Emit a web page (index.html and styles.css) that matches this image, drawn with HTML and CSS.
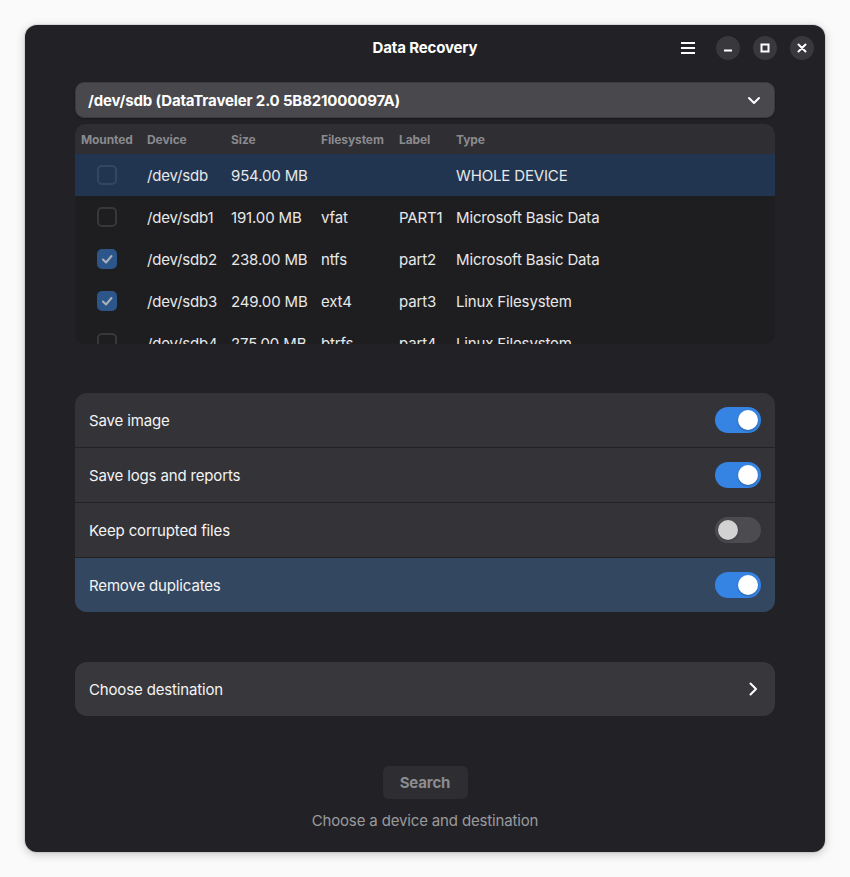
FILE: index.html
```html
<!DOCTYPE html>
<html lang="en">
<head>
<meta charset="utf-8">
<title>Data Recovery</title>
<link rel="stylesheet" href="styles.css">
</head>
<body>
<div class="window">
  <header class="headerbar">
    <div class="title">Data Recovery</div>
    <div class="hb-controls">
      <button class="menu-btn" aria-label="Menu">
        <svg width="16" height="14" viewBox="0 0 16 14"><rect x="1" y="1" width="14" height="2" fill="#fff"/><rect x="1" y="6" width="14" height="2" fill="#fff"/><rect x="1" y="11" width="14" height="2" fill="#fff"/></svg>
      </button>
      <button class="win-btn" aria-label="Minimize">
        <svg width="12" height="12" viewBox="0 0 12 12"><rect x="2" y="7.5" width="8" height="2" fill="#fff"/></svg>
      </button>
      <button class="win-btn" aria-label="Maximize">
        <svg width="12" height="12" viewBox="0 0 12 12"><rect x="2.5" y="2.5" width="7" height="7" fill="none" stroke="#fff" stroke-width="2"/></svg>
      </button>
      <button class="win-btn" aria-label="Close">
        <svg width="12" height="12" viewBox="0 0 12 12"><path d="M2.5 2.5 L9.5 9.5 M9.5 2.5 L2.5 9.5" stroke="#fff" stroke-width="2" stroke-linecap="round"/></svg>
      </button>
    </div>
  </header>

  <main class="content">
    <div class="dropdown">
      <span class="dropdown-label">/dev/sdb (DataTraveler 2.0 5B821000097A)</span>
      <svg class="chev-down" width="14" height="10" viewBox="0 0 14 10"><path d="M2 3 L7 8 L12 3" fill="none" stroke="#fff" stroke-width="2" stroke-linecap="round" stroke-linejoin="round"/></svg>
    </div>

    <div class="table">
      <div class="trow thead">
        <div class="c c1">Mounted</div>
        <div class="c c2">Device</div>
        <div class="c c3">Size</div>
        <div class="c c4">Filesystem</div>
        <div class="c c5">Label</div>
        <div class="c c6">Type</div>
      </div>
      <div class="trow selected">
        <div class="c c1"><span class="check"></span></div>
        <div class="c c2">/dev/sdb</div>
        <div class="c c3">954.00 MB</div>
        <div class="c c4"></div>
        <div class="c c5"></div>
        <div class="c c6">WHOLE DEVICE</div>
      </div>
      <div class="trow">
        <div class="c c1"><span class="check"></span></div>
        <div class="c c2">/dev/sdb1</div>
        <div class="c c3">191.00 MB</div>
        <div class="c c4">vfat</div>
        <div class="c c5">PART1</div>
        <div class="c c6">Microsoft Basic Data</div>
      </div>
      <div class="trow">
        <div class="c c1"><span class="check checked"><svg width="14" height="14" viewBox="0 0 14 14"><path d="M3 7.5 L6 10.5 L11.5 4" fill="none" stroke="#a9b1bc" stroke-width="2" stroke-linecap="round" stroke-linejoin="round"/></svg></span></div>
        <div class="c c2">/dev/sdb2</div>
        <div class="c c3">238.00 MB</div>
        <div class="c c4">ntfs</div>
        <div class="c c5">part2</div>
        <div class="c c6">Microsoft Basic Data</div>
      </div>
      <div class="trow">
        <div class="c c1"><span class="check checked"><svg width="14" height="14" viewBox="0 0 14 14"><path d="M3 7.5 L6 10.5 L11.5 4" fill="none" stroke="#a9b1bc" stroke-width="2" stroke-linecap="round" stroke-linejoin="round"/></svg></span></div>
        <div class="c c2">/dev/sdb3</div>
        <div class="c c3">249.00 MB</div>
        <div class="c c4">ext4</div>
        <div class="c c5">part3</div>
        <div class="c c6">Linux Filesystem</div>
      </div>
      <div class="trow">
        <div class="c c1"><span class="check"></span></div>
        <div class="c c2">/dev/sdb4</div>
        <div class="c c3">275.00 MB</div>
        <div class="c c4">btrfs</div>
        <div class="c c5">part4</div>
        <div class="c c6">Linux Filesystem</div>
      </div>
    </div>

    <div class="list">
      <div class="list-row">
        <span>Save image</span>
        <span class="switch on"><span class="knob"></span></span>
      </div>
      <div class="list-row">
        <span>Save logs and reports</span>
        <span class="switch on"><span class="knob"></span></span>
      </div>
      <div class="list-row">
        <span>Keep corrupted files</span>
        <span class="switch"><span class="knob"></span></span>
      </div>
      <div class="list-row active">
        <span>Remove duplicates</span>
        <span class="switch on"><span class="knob"></span></span>
      </div>
    </div>

    <div class="list single">
      <div class="list-row nav">
        <span>Choose destination</span>
        <svg width="10" height="16" viewBox="0 0 10 16"><path d="M2.5 2.5 L8 8 L2.5 13.5" fill="none" stroke="#fff" stroke-width="2" stroke-linecap="round" stroke-linejoin="round"/></svg>
      </div>
    </div>

    <div class="actions">
      <button class="search-btn">Search</button>
      <div class="caption">Choose a device and destination</div>
    </div>
  </main>
</div>
</body>
</html>
```
FILE: styles.css
```css
* { box-sizing: border-box; }
html, body { margin: 0; padding: 0; }
body {
  background: #fafafa;
  font-family: Inter, "Noto Sans", sans-serif;
  color: #ffffff;
  width: 850px;
  height: 877px;
  overflow: hidden;
  letter-spacing: -0.15px;
}
.window {
  margin: 25px;
  width: 800px;
  height: 827px;
  background: #222226;
  border-radius: 12px;
  box-shadow: 0 2px 10px rgba(0,0,0,0.22), 0 0 0 1px rgba(0,0,0,0.08);
  display: flex;
  flex-direction: column;
}
.headerbar {
  height: 46px;
  position: relative;
  display: flex;
  align-items: center;
  justify-content: center;
}
.title {
  font-size: 15px;
  font-weight: 700;
  color: #ffffff;
  padding-bottom: 2px;
}
.hb-controls {
  position: absolute;
  right: 11px;
  top: 11px;
  display: flex;
  align-items: center;
  gap: 13px;
}
button {
  font-family: inherit;
  letter-spacing: inherit;
  border: none;
  padding: 0;
  cursor: default;
}
.menu-btn {
  width: 24px;
  height: 24px;
  background: transparent;
  display: flex;
  align-items: center;
  justify-content: center;
  margin-right: 3px;
}
.win-btn {
  width: 24px;
  height: 24px;
  border-radius: 50%;
  background: #38383d;
  display: flex;
  align-items: center;
  justify-content: center;
}
.content {
  padding: 11px 50px 0;
  display: flex;
  flex-direction: column;
}
.dropdown {
  height: 36px;
  background: #48484d;
  border: 1px solid #3a3a3f;
  border-radius: 9px;
  display: flex;
  align-items: center;
  justify-content: space-between;
  padding: 0 13px 0 12px;
  box-shadow: 0 1px 2px rgba(0,0,0,0.25);
}
.dropdown-label {
  font-size: 15px;
  font-weight: 700;
}
.table {
  margin-top: 6px;
  height: 220px;
  overflow: hidden;
  border-radius: 10px;
  background: #1e1e21;
}
.trow {
  display: grid;
  grid-template-columns: 66px 84px 90px 78px 57px 1fr;
  height: 42px;
  align-items: center;
  font-size: 15px;
  color: #e8e8e8;
}
.trow.thead {
  height: 30px;
  background: #2e2e33;
  font-size: 12px;
  font-weight: 700;
  color: #8a8a8e;
  letter-spacing: -0.1px;
}
.trow .c { padding-left: 6px; white-space: nowrap; }
.trow .c1 { padding-left: 22px; display: flex; }
.thead .c1 { padding-left: 6px; }
.trow.selected { background: #223550; }
.check {
  width: 20px;
  height: 20px;
  border-radius: 5px;
  border: 2px solid #37373c;
  display: flex;
  align-items: center;
  justify-content: center;
}
.selected .check { border-color: #344760; }
.check.checked {
  background: #2c568a;
  border-color: #2c568a;
}
.list {
  margin-top: 49px;
  border-radius: 12px;
  background: #333338;
  overflow: hidden;
}
.list-row {
  height: 55px;
  display: flex;
  align-items: center;
  justify-content: space-between;
  padding: 0 14px;
  font-size: 15px;
  color: #f4f4f4;
  border-top: 1px solid #222226;
}
.list-row:first-child { border-top: none; height: 54px; }
.list-row.active { background: #344760; }
.list.single {
  margin-top: 50px;
  background: #37373c;
}
.list-row.nav { height: 54px; padding-right: 17px; }
.switch {
  width: 46px;
  height: 26px;
  border-radius: 13px;
  background: #4b4b50;
  position: relative;
  display: flex;
  align-items: center;
  padding: 0 3px;
}
.switch .knob {
  width: 20px;
  height: 20px;
  border-radius: 50%;
  background: #d2d2d2;
  box-shadow: 0 1px 2px rgba(0,0,0,0.3);
}
.switch.on {
  background: #3584e4;
  justify-content: flex-end;
}
.switch.on .knob { background: #ffffff; }
.actions {
  margin-top: 50px;
  display: flex;
  flex-direction: column;
  align-items: center;
}
.search-btn {
  width: 85px;
  height: 33px;
  border-radius: 6px;
  background: #2e2e32;
  color: #8c8c90;
  font-size: 15px;
  font-weight: 700;
}
.caption {
  margin-top: 12px;
  font-size: 15px;
  color: #9a9a9e;
}
```
